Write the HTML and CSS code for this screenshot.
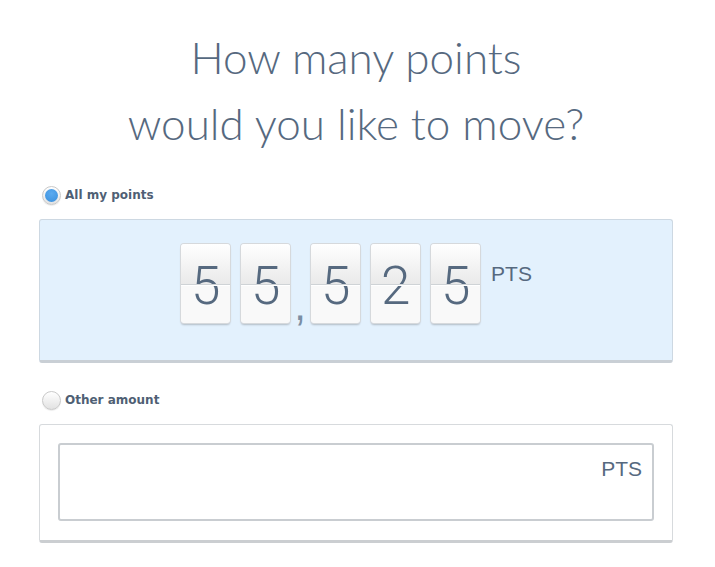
FILE: index.html
```html
<!DOCTYPE html>
<html>
<head>
<meta charset="utf-8">
<link rel="stylesheet" href="styles.css">
</head>
<body>
<div class="page">
  <h1 class="title">How many points<br>would you like to move?</h1>

  <label class="option">
    <span class="radio checked"><span class="dot"></span></span>
    <span class="option-label">All my points</span>
  </label>
  <div class="panel panel-blue">
    <div class="counter">
      <div class="card"><span class="digit">5</span></div>
      <div class="card"><span class="digit">5</span></div>
      <div class="comma">,</div>
      <div class="card"><span class="digit">5</span></div>
      <div class="card"><span class="digit">2</span></div>
      <div class="card"><span class="digit">5</span></div>
      <div class="unit">PTS</div>
    </div>
  </div>

  <label class="option option-second">
    <span class="radio"></span>
    <span class="option-label">Other amount</span>
  </label>
  <div class="panel panel-white">
    <div class="input">
      <span class="input-unit">PTS</span>
    </div>
  </div>
</div>
</body>
</html>
```

FILE: styles.css
```css
html, body {
  margin: 0;
  padding: 0;
  background: #ffffff;
}

.page {
  width: 634px;
  margin-left: 39px;
  padding-top: 24px;
  color: #56697f;
}

.title {
  margin: 0;
  font-family: Lato, "Liberation Sans", sans-serif;
  font-weight: 300;
  font-size: 44px;
  line-height: 66px;
  text-align: center;
  color: #56697f;
}

.option {
  display: flex;
  align-items: center;
  gap: 4px;
  height: 20px;
  margin-top: 29px;
  margin-left: 3px;
}

.option-second {
  margin-top: 27px;
}

.radio {
  width: 17px;
  height: 17px;
  border-radius: 50%;
  border: 1px solid #c9c9c9;
  background: linear-gradient(#ffffff, #e2e2e2);
  box-shadow: 0 1px 1px rgba(0,0,0,0.08);
  display: flex;
  align-items: center;
  justify-content: center;
  flex: none;
}

.radio .dot {
  width: 13px;
  height: 13px;
  border-radius: 50%;
  background: radial-gradient(circle at 50% 35%, #5aaaf0, #3a8fdc);
}

.option-label {
  font-family: "DejaVu Sans", Verdana, sans-serif;
  font-weight: bold;
  font-size: 12px;
  color: #4f5f74;
}

.panel {
  margin-top: 14px;
  border-radius: 3px;
  box-sizing: border-box;
}

.panel-blue {
  height: 144px;
  background: #e3f1fd;
  border: 1px solid #cdd8e2;
  border-bottom: 3px solid #c9cfd5;
  padding-top: 23px;
}

.counter {
  display: flex;
  justify-content: center;
  align-items: flex-start;
  margin-left: 1px;
}

.card {
  position: relative;
  width: 49px;
  height: 79px;
  margin-top: 1px;
  margin-right: 11px;
  border-radius: 3px;
  background: linear-gradient(#ffffff 0, #e9e9e9 52%, #f9f9f9 52%, #f9f9f9 100%);
  box-shadow: 0 0 0 1px #d6d9dc, 0 2px 2px rgba(0,0,0,0.22);
  display: flex;
  justify-content: center;
  overflow: hidden;
}

.card::after {
  content: "";
  position: absolute;
  left: 0;
  right: 0;
  top: 41px;
  height: 1px;
  background: #ffffff;
  box-shadow: 0 -1px 0 #cfd3d6;
}

.digit {
  font-family: Roboto, "Liberation Sans", sans-serif;
  font-weight: 300;
  font-size: 53px;
  line-height: 80px;
  margin-top: 2px;
  color: #56697f;
}

.comma {
  width: 10px;
  margin-left: -6px;
  margin-right: 6px;
  height: 84px;
  font-family: "Liberation Sans", sans-serif;
  font-size: 42px;
  line-height: 42px;
  color: #7b8ea4;
  display: flex;
  align-items: flex-end;
  justify-content: center;
}

.unit {
  font-family: "Liberation Sans", sans-serif;
  font-size: 21px;
  line-height: 24px;
  margin-top: 19px;
  margin-left: 0;
  color: #56697f;
}

.panel-white {
  height: 119px;
  background: #ffffff;
  border: 1px solid #d7dadd;
  border-bottom: 3px solid #cbced1;
  padding: 18px 18px 0 18px;
}

.input {
  height: 78px;
  box-sizing: border-box;
  border: 2px solid #c9cdd1;
  border-radius: 3px;
  background: #ffffff;
  display: flex;
  justify-content: flex-end;
  padding: 12px 10px 0 0;
}

.input-unit {
  font-family: "Liberation Sans", sans-serif;
  font-size: 21px;
  line-height: 24px;
  color: #56697f;
}
```
